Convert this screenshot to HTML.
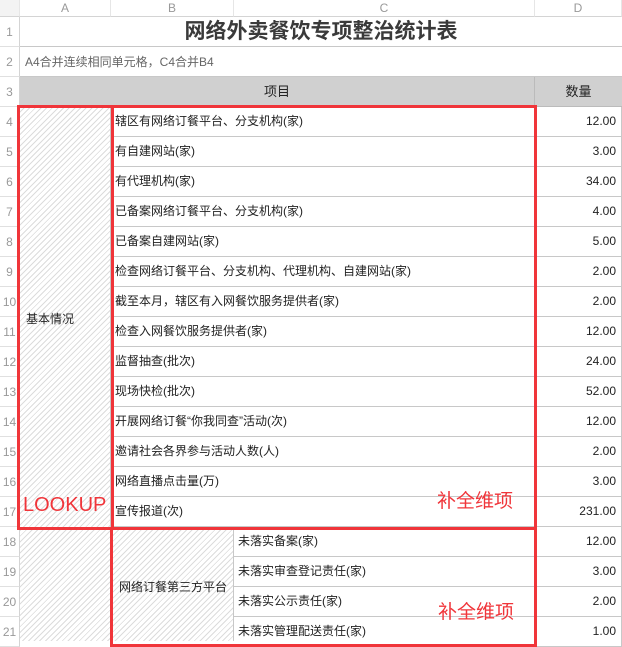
<!DOCTYPE html>
<html><head><meta charset="utf-8"><style>
body{margin:0;width:622px;height:641px;overflow:hidden;background:#fff;font-family:"Liberation Sans","Noto Sans CJK SC",sans-serif;position:relative}
.a{position:absolute;box-sizing:border-box}
.hd{color:#999;font-size:12px;text-align:center;line-height:17px;top:0;height:17px;border-right:1px solid #e6e6e6;border-bottom:1px solid #d4d4d4;background:#fff}
.rn{left:0;width:20px;height:30px;color:#999;font-size:12px;text-align:center;line-height:30px;border-bottom:1px solid #e0e0e0;border-right:1px solid #d4d4d4}
.c{font-size:12px;color:#222;line-height:29px;white-space:nowrap;overflow:hidden;border-bottom:1px solid #c8c8c8;border-right:1px solid #c8c8c8;padding-left:4px}
.n{text-align:right;padding-right:5px;padding-left:0}
.h{background:repeating-linear-gradient(135deg,#fff 0 3px,#dcdcdc 3px 4px)}
.red{border:3px solid #f0353a}
.rt{color:#f0353a;font-size:19px}
</style></head><body>
<div class="a hd" style="left:0;width:20px;background:#f3f3f3"></div>
<div class="a hd" style="left:20px;width:91px">A</div>
<div class="a hd" style="left:111px;width:123px">B</div>
<div class="a hd" style="left:234px;width:301px">C</div>
<div class="a hd" style="left:535px;width:87px">D</div>

<div class="a rn" style="top:17px">1</div>
<div class="a rn" style="top:47px">2</div>
<div class="a rn" style="top:77px">3</div>
<div class="a" style="left:20px;top:17px;width:602px;height:30px;border-bottom:1px solid #c8c8c8;text-align:center;font-size:21px;font-weight:bold;color:#3a3a3a;line-height:30px">网络外卖餐饮专项整治统计表</div>
<div class="a" style="left:20px;top:47px;width:602px;height:30px;border-bottom:1px solid #c8c8c8;font-size:12px;color:#666;line-height:30px;padding-left:5px">A4合并连续相同单元格，C4合并B4</div>
<div class="a" style="left:20px;top:77px;width:515px;height:30px;background:#d0d0d0;border-right:1px solid #bbb;border-bottom:1px solid #bbb;text-align:center;font-size:13px;line-height:30px;color:#222">项目</div>
<div class="a" style="left:535px;top:77px;width:87px;height:30px;background:#d0d0d0;border-bottom:1px solid #bbb;text-align:center;font-size:13px;line-height:30px;color:#222">数量</div>

<div class="a rn" style="top:107px">4</div>
<div class="a rn" style="top:137px">5</div>
<div class="a rn" style="top:167px">6</div>
<div class="a rn" style="top:197px">7</div>
<div class="a rn" style="top:227px">8</div>
<div class="a rn" style="top:257px">9</div>
<div class="a rn" style="top:287px">10</div>
<div class="a rn" style="top:317px">11</div>
<div class="a rn" style="top:347px">12</div>
<div class="a rn" style="top:377px">13</div>
<div class="a rn" style="top:407px">14</div>
<div class="a rn" style="top:437px">15</div>
<div class="a rn" style="top:467px">16</div>
<div class="a rn" style="top:497px">17</div>
<div class="a rn" style="top:527px">18</div>
<div class="a rn" style="top:557px">19</div>
<div class="a rn" style="top:587px">20</div>
<div class="a rn" style="top:617px">21</div>

<div class="a h" style="left:20px;top:107px;width:91px;height:534px;border-right:1px solid #c8c8c8"></div>
<div class="a" style="left:26px;top:310px;font-size:12px;color:#222">基本情况</div>

<div class="a c" style="left:111px;top:107px;width:424px;height:30px">辖区有网络订餐平台、分支机构(家)</div>
<div class="a c" style="left:111px;top:137px;width:424px;height:30px">有自建网站(家)</div>
<div class="a c" style="left:111px;top:167px;width:424px;height:30px">有代理机构(家)</div>
<div class="a c" style="left:111px;top:197px;width:424px;height:30px">已备案网络订餐平台、分支机构(家)</div>
<div class="a c" style="left:111px;top:227px;width:424px;height:30px">已备案自建网站(家)</div>
<div class="a c" style="left:111px;top:257px;width:424px;height:30px">检查网络订餐平台、分支机构、代理机构、自建网站(家)</div>
<div class="a c" style="left:111px;top:287px;width:424px;height:30px">截至本月，辖区有入网餐饮服务提供者(家)</div>
<div class="a c" style="left:111px;top:317px;width:424px;height:30px">检查入网餐饮服务提供者(家)</div>
<div class="a c" style="left:111px;top:347px;width:424px;height:30px">监督抽查(批次)</div>
<div class="a c" style="left:111px;top:377px;width:424px;height:30px">现场快检(批次)</div>
<div class="a c" style="left:111px;top:407px;width:424px;height:30px">开展网络订餐“你我同查”活动(次)</div>
<div class="a c" style="left:111px;top:437px;width:424px;height:30px">邀请社会各界参与活动人数(人)</div>
<div class="a c" style="left:111px;top:467px;width:424px;height:30px">网络直播点击量(万)</div>
<div class="a c" style="left:111px;top:497px;width:424px;height:30px">宣传报道(次)</div>

<div class="a h" style="left:111px;top:527px;width:123px;height:114px;border-right:1px solid #c8c8c8"></div>
<div class="a" style="left:119px;top:578px;font-size:12px;color:#222">网络订餐第三方平台</div>
<div class="a c" style="left:234px;top:527px;width:301px;height:30px">未落实备案(家)</div>
<div class="a c" style="left:234px;top:557px;width:301px;height:30px">未落实审查登记责任(家)</div>
<div class="a c" style="left:234px;top:587px;width:301px;height:30px">未落实公示责任(家)</div>
<div class="a c" style="left:234px;top:617px;width:301px;height:30px">未落实管理配送责任(家)</div>

<div class="a c n" style="left:535px;top:107px;width:87px;height:30px">12.00</div>
<div class="a c n" style="left:535px;top:137px;width:87px;height:30px">3.00</div>
<div class="a c n" style="left:535px;top:167px;width:87px;height:30px">34.00</div>
<div class="a c n" style="left:535px;top:197px;width:87px;height:30px">4.00</div>
<div class="a c n" style="left:535px;top:227px;width:87px;height:30px">5.00</div>
<div class="a c n" style="left:535px;top:257px;width:87px;height:30px">2.00</div>
<div class="a c n" style="left:535px;top:287px;width:87px;height:30px">2.00</div>
<div class="a c n" style="left:535px;top:317px;width:87px;height:30px">12.00</div>
<div class="a c n" style="left:535px;top:347px;width:87px;height:30px">24.00</div>
<div class="a c n" style="left:535px;top:377px;width:87px;height:30px">52.00</div>
<div class="a c n" style="left:535px;top:407px;width:87px;height:30px">12.00</div>
<div class="a c n" style="left:535px;top:437px;width:87px;height:30px">2.00</div>
<div class="a c n" style="left:535px;top:467px;width:87px;height:30px">3.00</div>
<div class="a c n" style="left:535px;top:497px;width:87px;height:30px">231.00</div>
<div class="a c n" style="left:535px;top:527px;width:87px;height:30px">12.00</div>
<div class="a c n" style="left:535px;top:557px;width:87px;height:30px">3.00</div>
<div class="a c n" style="left:535px;top:587px;width:87px;height:30px">2.00</div>
<div class="a c n" style="left:535px;top:617px;width:87px;height:30px">1.00</div>

<div class="a red" style="left:17px;top:105px;width:520px;height:425px"></div>
<div class="a" style="left:111px;top:107px;width:3px;height:421px;background:#f0353a"></div>
<div class="a red" style="left:110px;top:527px;width:427px;height:120px"></div>
<div class="a rt" style="left:23px;top:494px;font-size:20px">LOOKUP</div>
<div class="a rt" style="left:437px;top:486px">补全维项</div>
<div class="a rt" style="left:438px;top:597px">补全维项</div>
</body></html>
